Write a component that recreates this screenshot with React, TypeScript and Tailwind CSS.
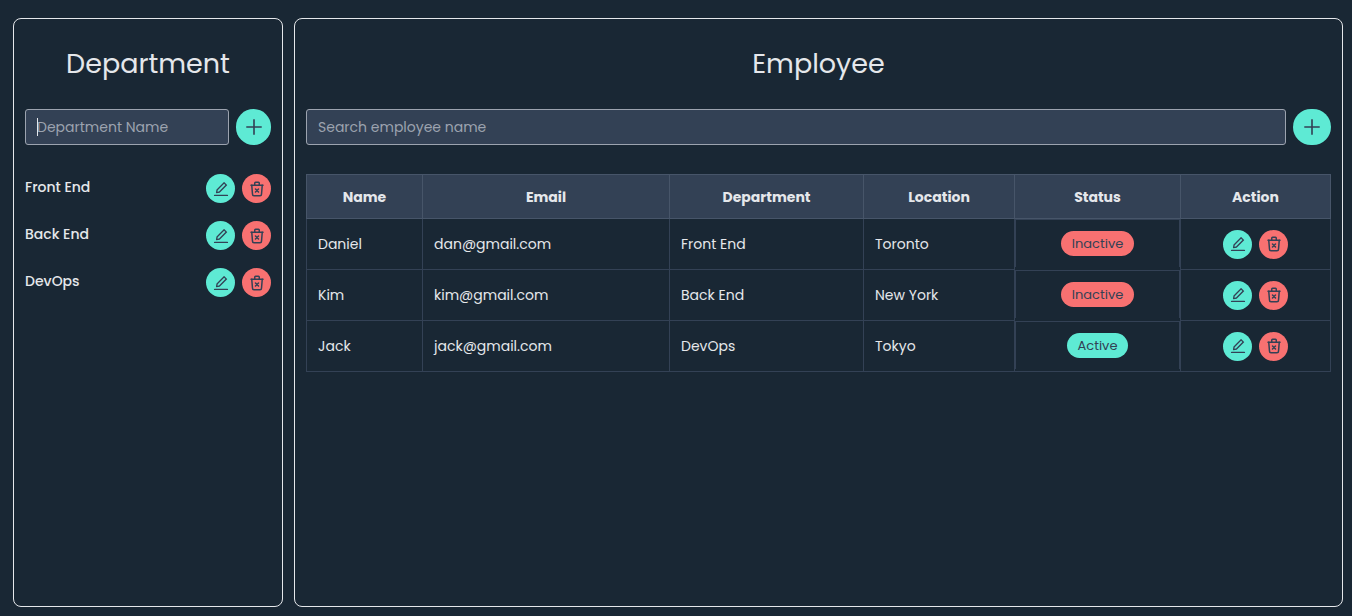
import { useState } from "react";
import { AiOutlineEdit, AiOutlinePlus } from "react-icons/ai";
import { TbTrashX } from "react-icons/tb";

interface Department {
  id: number;
  name: string;
}

interface Employee {
  id: number;
  name: string;
  email: string;
  department: string;
  location: string;
  active: boolean;
}

const initialDepartments: Department[] = [
  { id: 1, name: "Front End" },
  { id: 2, name: "Back End" },
  { id: 3, name: "DevOps" },
];

const initialEmployees: Employee[] = [
  { id: 1, name: "Daniel", email: "dan@gmail.com", department: "Front End", location: "Toronto", active: false },
  { id: 2, name: "Kim", email: "kim@gmail.com", department: "Back End", location: "New York", active: false },
  { id: 3, name: "Jack", email: "jack@gmail.com", department: "DevOps", location: "Tokyo", active: true },
];

const columns = [
  { label: "Name", width: "w-[116px]" },
  { label: "Email", width: "w-[247px]" },
  { label: "Department", width: "w-[194px]" },
  { label: "Location", width: "w-[151px]" },
  { label: "Status", width: "w-[166px]" },
  { label: "Action", width: "w-[150px]" },
];

const RowActions = ({ name, onDelete }: { name: string; onDelete: () => void }) => (
  <div className="flex justify-center gap-[7px]">
    <button
      type="button"
      aria-label={`Edit ${name}`}
      className="flex size-[29px] items-center justify-center rounded-full bg-[#5eead4] text-[#334155]"
    >
      <AiOutlineEdit size={18} />
    </button>
    <button
      type="button"
      aria-label={`Delete ${name}`}
      onClick={onDelete}
      className="flex size-[29px] items-center justify-center rounded-full bg-[#f87171] text-[#334155]"
    >
      <TbTrashX size={18} />
    </button>
  </div>
);

const DepartmentPanel = () => {
  const [departments, setDepartments] = useState(initialDepartments);
  const [name, setName] = useState("");

  const addDepartment = () => {
    if (!name.trim()) return;
    setDepartments([...departments, { id: Date.now(), name: name.trim() }]);
    setName("");
  };

  return (
    <section className="w-[270px] shrink-0 rounded-lg border border-gray-200 px-[11px] pt-6">
      <h1 className="text-center text-[27px] leading-[42px]">Department</h1>
      <div className="mt-6 flex gap-[7px]">
        <div className="relative min-w-0 flex-1">
          <input
            type="text"
            aria-label="Department Name"
            placeholder="Department Name"
            value={name}
            onChange={(e) => setName(e.target.value)}
            className="h-9 w-full rounded-[3px] border border-[#9ca3af] bg-[#334155] px-[11px] text-sm outline-none placeholder:text-[#9ca3af]"
          />
          {/* text cursor */}
          {!name && <span className="pointer-events-none absolute top-[9px] left-3 h-[18px] w-px bg-gray-200" />}
        </div>
        <button
          type="button"
          aria-label="Add department"
          onClick={addDepartment}
          className="flex h-9 w-[35px] items-center justify-center rounded-full bg-[#5eead4] text-[#334155]"
        >
          <AiOutlinePlus size={22} />
        </button>
      </div>
      <ul className="mt-[29px] flex flex-col gap-[18px]">
        {departments.map((department) => (
          <li key={department.id} className="flex items-start justify-between">
            <span className="text-sm leading-[26px] font-medium">{department.name}</span>
            <RowActions
              name={department.name}
              onDelete={() => setDepartments(departments.filter((d) => d.id !== department.id))}
            />
          </li>
        ))}
      </ul>
    </section>
  );
};

const EmployeePanel = () => {
  const [employees, setEmployees] = useState(initialEmployees);
  const [search, setSearch] = useState("");

  const filtered = employees.filter((e) => e.name.toLowerCase().includes(search.toLowerCase()));

  return (
    <section className="min-w-0 flex-1 rounded-lg border border-gray-200 px-[11px] pt-6">
      <h1 className="text-center text-[27px] leading-[42px]">Employee</h1>
      <div className="mt-6 flex gap-[7px]">
        <input
          type="text"
          aria-label="Search employee name"
          placeholder="Search employee name"
          value={search}
          onChange={(e) => setSearch(e.target.value)}
          className="h-9 min-w-0 flex-1 rounded-[3px] border border-[#9ca3af] bg-[#334155] px-[11px] text-sm outline-none placeholder:text-[#9ca3af]"
        />
        <button
          type="button"
          aria-label="Add employee"
          className="flex h-9 w-[38px] items-center justify-center rounded-full bg-[#5eead4] text-[#334155]"
        >
          <AiOutlinePlus size={22} />
        </button>
      </div>
      <table className="mt-[29px] w-full table-fixed border-collapse border border-[#334155] text-sm">
        <thead>
          <tr className="h-11 bg-[#334155]">
            {columns.map((column) => (
              <th key={column.label} className={`${column.width} border border-[#475569] font-bold`}>
                {column.label}
              </th>
            ))}
          </tr>
        </thead>
        <tbody>
          {filtered.map((employee) => (
            <tr key={employee.id} className="h-[51px]">
              <td className="border border-[#334155] px-[11px]">{employee.name}</td>
              <td className="border border-[#334155] px-[11px]">{employee.email}</td>
              <td className="border border-[#334155] px-[11px]">{employee.department}</td>
              <td className="border border-[#334155] px-[11px]">{employee.location}</td>
              <td className="flex justify-center border border-b-0 border-[#334155] py-[11px]">
                {employee.active ? (
                  <span className="h-[25px] rounded-full bg-[#5eead4] px-[11px] text-[13px] leading-[25px] text-[#334155]">
                    Active
                  </span>
                ) : (
                  <span className="h-[25px] rounded-full bg-[#f87171] px-[11px] text-[13px] leading-[25px] text-[#334155]">
                    Inactive
                  </span>
                )}
              </td>
              <td className="border border-[#334155]">
                <RowActions
                  name={employee.name}
                  onDelete={() => setEmployees(employees.filter((e) => e.id !== employee.id))}
                />
              </td>
            </tr>
          ))}
        </tbody>
      </table>
    </section>
  );
};

const App = () => {
  return (
    <main className="flex min-h-screen gap-[11px] bg-[#192734] pt-[18px] pr-[9px] pb-[9px] pl-[13px] font-['Poppins','Inter',sans-serif] text-gray-200">
      <DepartmentPanel />
      <EmployeePanel />
    </main>
  );
};

export default App;
